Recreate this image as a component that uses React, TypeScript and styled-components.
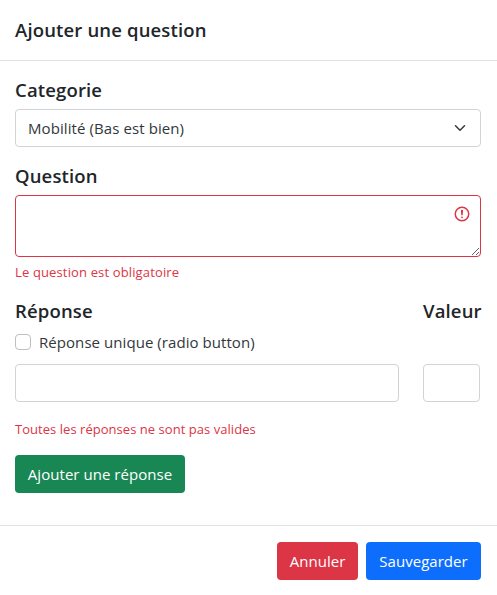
import React from "react";
import styled, { createGlobalStyle } from "styled-components";

const GlobalStyle = createGlobalStyle`
  *, *::before, *::after { box-sizing: border-box; }
  body {
    margin: 0;
    background: #fff;
    color: #212529;
    font-family: "Open Sans", "Noto Sans", sans-serif;
    font-size: 15px;
    line-height: 24px;
    overflow: hidden;
  }
`;

const Modal = styled.form`
  display: flex;
  flex-direction: column;
  width: 497px;
  height: 595px;
  background: #fff;
`;

const Header = styled.header`
  height: 61px;
  padding: 15px 15px 0;
  border-bottom: 1px solid #dee2e6;
`;

const Title = styled.h5`
  margin: 0;
  font-size: 18.5px;
  font-weight: 550;
  line-height: 30px;
  white-space: nowrap;
  letter-spacing: 0.15px;
`;

const Body = styled.div`
  display: flex;
  flex: 1;
  flex-direction: column;
  align-items: flex-start;
  padding: 16px 16px 0 15px;
`;

const Field = styled.div<{ $gap: number }>`
  width: 100%;
  margin-bottom: ${(p) => p.$gap}px;
`;

const Label = styled(Title)`
  height: 32px;
  line-height: 26px;
`;

const SelectBox = styled.div`
  display: grid;
  align-items: center;
  > * { grid-area: 1 / 1; }
  > svg { justify-self: end; margin-right: 13px; pointer-events: none; }
`;

const Select = styled.select`
  appearance: none;
  width: 100%;
  height: 38px;
  padding: 0 36px 0 12px;
  border: 1px solid #ced4da;
  border-radius: 4px;
  background: #fff;
  color: #32373c;
  font: inherit;
  letter-spacing: 0.09px;
`;

const AreaBox = styled.div`
  display: grid;
  > * { grid-area: 1 / 1; }
  > svg { justify-self: end; margin: 10px 10px 0 0; pointer-events: none; }
`;

const TextArea = styled.textarea`
  display: block;
  width: 100%;
  height: 62px;
  padding: 6px 36px 6px 12px;
  border: 1px solid #dc3545;
  border-radius: 4px;
  background: #fff;
  font: inherit;
  resize: vertical;
`;

const ErrorText = styled.div<{ $spacing: number }>`
  margin-top: 5px;
  height: 21px;
  color: #dc3545;
  font-size: 13px;
  line-height: 21px;
  white-space: nowrap;
  letter-spacing: ${(p) => p.$spacing}px;
`;

const AnswerGrid = styled.div`
  display: grid;
  grid-template-columns: 384px 57px;
  column-gap: 24px;
  margin-bottom: 12px;
`;

const Check = styled.label`
  display: flex;
  grid-column: 1 / -1;
  align-items: center;
  gap: 8px;
  height: 24px;
  margin-bottom: 10px;
  color: #32373c;
  letter-spacing: 0.06px;
`;

const Checkbox = styled.input`
  appearance: none;
  width: 16px;
  height: 16px;
  margin: 0;
  border: 1px solid #bfbfbf;
  border-radius: 4px;
  background: #fff;
`;

const Input = styled.input`
  width: 100%;
  height: 38px;
  padding: 6px 12px;
  border: 1px solid #ced4da;
  border-radius: 4px;
  background: #fff;
  font: inherit;
`;

const Button = styled.button<{ $color: string; $width: number }>`
  width: ${(p) => p.$width}px;
  height: 38px;
  padding: 0;
  border: 0;
  border-radius: 4px;
  background: ${(p) => p.$color};
  color: #fff;
  font: inherit;
  white-space: nowrap;
  letter-spacing: 0.04px;
`;

const Footer = styled.footer`
  display: flex;
  justify-content: flex-end;
  gap: 8px;
  height: 70px;
  padding: 16px 16px 0;
  border-top: 1px solid #dee2e6;
`;

const Chevron = () => (
  <svg width="16" height="12" viewBox="0 0 16 16" fill="none" stroke="#343a40" strokeWidth="2" strokeLinecap="round" strokeLinejoin="round">
    <path d="M2 5l6 6 6-6" />
  </svg>
);

const InvalidIcon = () => (
  <svg width="18" height="18" viewBox="0 0 12 12" fill="none" stroke="#dc3545">
    <circle cx="6" cy="6" r="4.5" />
    <path d="M5.8 3.6h.4L6 6.5z" strokeLinejoin="round" />
    <circle cx="6" cy="8.2" r=".6" fill="#dc3545" stroke="none" />
  </svg>
);

export default function App() {
  return (
    <>
      <GlobalStyle />
      <Modal onSubmit={(e) => e.preventDefault()}>
        <Header>
          <Title>Ajouter une question</Title>
        </Header>
        <Body>
          <Field $gap={16}>
            <Label>Categorie</Label>
            <SelectBox>
              <Select aria-label="Categorie">
                <option>Mobilité (Bas est bien)</option>
              </Select>
              <Chevron />
            </SelectBox>
          </Field>
          <Field $gap={15}>
            <Label>Question</Label>
            <AreaBox>
              <TextArea aria-label="Question" />
              <InvalidIcon />
            </AreaBox>
            <ErrorText $spacing={0.14}>Le question est obligatoire</ErrorText>
          </Field>
          <AnswerGrid>
            <Label>Réponse</Label>
            <Label>Valeur</Label>
            <Check>
              <Checkbox type="checkbox" />
              Réponse unique (radio button)
            </Check>
            <Input aria-label="Réponse" />
            <Input aria-label="Valeur" />
          </AnswerGrid>
          <Field $gap={15}>
            <ErrorText $spacing={0.04}>Toutes les réponses ne sont pas valides</ErrorText>
          </Field>
          <Button type="button" $color="#198754" $width={170}>Ajouter une réponse</Button>
        </Body>
        <Footer>
          <Button type="button" $color="#dc3545" $width={81}>Annuler</Button>
          <Button type="submit" $color="#0d6efd" $width={115}>Sauvegarder</Button>
        </Footer>
      </Modal>
    </>
  );
}
